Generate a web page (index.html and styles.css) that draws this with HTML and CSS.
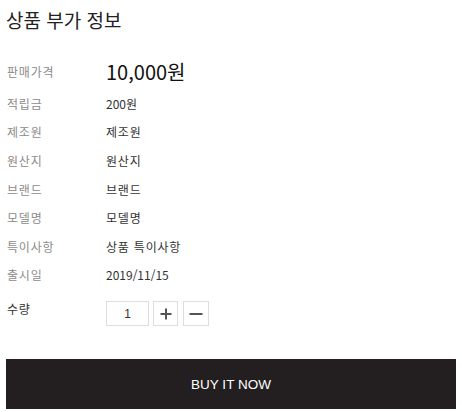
FILE: index.html
```html
<!DOCTYPE html>
<html lang="ko">
<head>
    <meta charset="UTF-8">
    <meta name="viewport" content="width=device-width, initial-scale=1.0">
    <title>상품 부가 정보</title>
    <link rel="stylesheet" href="styles.css">
</head>
<body>
    <div class="container">
        <h2 class="title">상품 부가 정보</h2>

        <div class="info">
            <div class="row price-row">
                <span class="label">판매가격</span>
                <span class="value price">10,000원</span>
            </div>
            <div class="row">
                <span class="label">적립금</span>
                <span class="value">200원</span>
            </div>
            <div class="row">
                <span class="label">제조원</span>
                <span class="value ko">제조원</span>
            </div>
            <div class="row">
                <span class="label">원산지</span>
                <span class="value ko">원산지</span>
            </div>
            <div class="row">
                <span class="label">브랜드</span>
                <span class="value ko">브랜드</span>
            </div>
            <div class="row">
                <span class="label">모델명</span>
                <span class="value ko">모델명</span>
            </div>
            <div class="row">
                <span class="label">특이사항</span>
                <span class="value ko">상품 특이사항</span>
            </div>
            <div class="row">
                <span class="label">출시일</span>
                <span class="value">2019/11/15</span>
            </div>
            <div class="row qty-row">
                <span class="label qty-label">수량</span>
                <div class="qty">
                    <input type="text" class="qty-input" value="1">
                    <button type="button" class="qty-btn" aria-label="plus">
                        <svg width="12" height="12" viewBox="0 0 12 12"><path d="M6 0.5V11.5M0.5 6H11.5" stroke="#555" stroke-width="2"/></svg>
                    </button>
                    <button type="button" class="qty-btn minus" aria-label="minus">
                        <svg width="14" height="12" viewBox="0 0 14 12"><path d="M0.5 6H13.5" stroke="#555" stroke-width="2"/></svg>
                    </button>
                </div>
            </div>
        </div>

        <button type="button" class="buy-button">BUY IT NOW</button>
    </div>
</body>
</html>
```

FILE: styles.css
```css
body {
    font-family: "Noto Sans CJK KR", "Liberation Sans", sans-serif;
    background-color: #fff;
    margin: 0;
    padding: 0;
    color: #333;
}

.container {
    padding: 8px 6px 0 6px;
}

.title {
    margin: 0;
    font-size: 19px;
    font-weight: normal;
    line-height: 24px;
    color: #222;
}

.info {
    margin-top: 21px;
}

.row {
    display: grid;
    grid-template-columns: 100px 1fr;
    align-items: center;
    height: 28.6px;
    font-size: 12px;
}

.label {
    padding-left: 1px;
    color: #8c8c8c;
    letter-spacing: 0.8px;
}

.value {
    color: #333;
}

.value.ko {
    letter-spacing: 0.8px;
}

.price-row {
    height: 36px;
}

.price {
    font-size: 20px;
    color: #111;
}

.qty-row {
    height: auto;
    align-items: start;
    padding-top: 12px;
}

.qty-label {
    color: #333;
    line-height: 16px;
}

.qty {
    display: flex;
    align-items: center;
}

.qty-input {
    box-sizing: border-box;
    width: 43px;
    height: 25px;
    padding: 0;
    border: 1px solid #ddd;
    text-align: center;
    font-family: "Liberation Sans", sans-serif;
    font-size: 12px;
    color: #333;
}

.qty-btn {
    box-sizing: border-box;
    width: 25px;
    height: 25px;
    margin-left: 4px;
    padding: 0;
    border: 1px solid #ddd;
    background-color: #fff;
    display: flex;
    align-items: center;
    justify-content: center;
    cursor: pointer;
}

.qty-btn.minus {
    width: 26px;
    margin-left: 5px;
}

.buy-button {
    display: block;
    width: 100%;
    height: 50px;
    margin-top: 33px;
    background-color: #231f20;
    color: #fff;
    border: none;
    font-family: "Liberation Sans", sans-serif;
    font-size: 13.5px;
    cursor: pointer;
}
```
